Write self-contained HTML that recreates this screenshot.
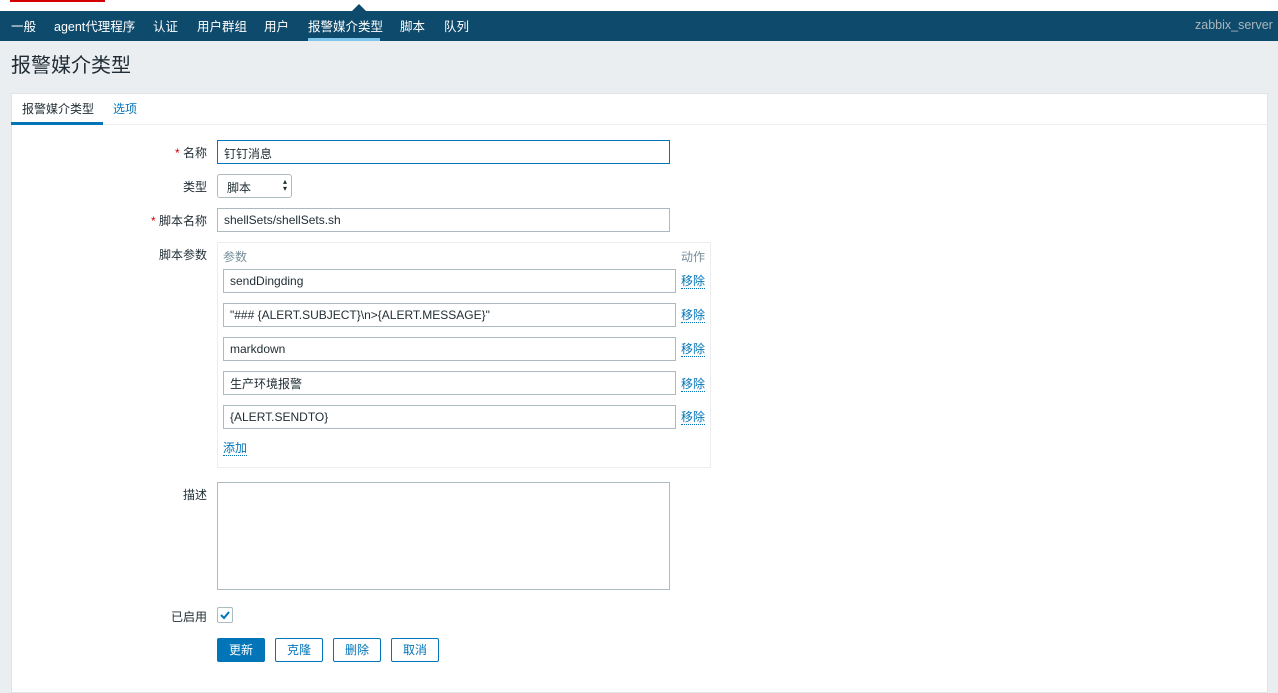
<!DOCTYPE html>
<html><head><meta charset="utf-8"><style>
*{box-sizing:border-box;margin:0;padding:0}
body{width:1278px;height:675px;overflow:hidden;background:#ebeef0;font-family:"Liberation Sans","Noto Sans CJK SC",sans-serif;font-size:12px;color:#1f2c33;position:relative}
.top{position:absolute;left:0;top:0;width:1278px;height:11px;background:#fff}
.red{position:absolute;left:10px;top:0;width:95px;height:2px;background:#d40000}
.nav{position:absolute;left:0;top:11px;width:1278px;height:30px;background:#0e4a6b}
.nav span{position:absolute;top:5px;color:#fff;font-size:12.5px}
.arrow{position:absolute;left:352px;top:4px;width:0;height:0;border-left:7px solid transparent;border-right:7px solid transparent;border-bottom:7px solid #0e4a6b}
.act{position:absolute;left:308px;top:38px;width:72px;height:3px;background:#7fc6ec}
h1{position:absolute;left:11px;top:49px;font-size:20px;font-weight:normal;color:#1f2c33}
.panel{position:absolute;left:11px;top:93px;width:1257px;height:600px;background:#fff;border:1px solid #dfe4e7}
.tabs{position:absolute;left:11px;top:93px;width:1257px;height:32px;border-bottom:1px solid #ebeef0}
.t1{position:absolute;left:22px;top:100px;font-size:12px}
.t1u{position:absolute;left:11px;top:122px;width:92px;height:3px;background:#0275b8}
.t2{position:absolute;left:113px;top:100px;color:#0275b8}
.lbl{position:absolute;right:1071px;font-size:12px;white-space:nowrap}
.star{color:#d40000}
.in{position:absolute;height:24px;border:1px solid #acbbc2;background:#fff;padding:4px 6px;font-size:12px}
.link{position:absolute;color:#0275b8;border-bottom:1px dotted #0275b8;line-height:14px}
.btn{position:absolute;top:638px;height:24px;border:1px solid #0275b8;border-radius:2px;color:#0275b8;text-align:center;line-height:22px;background:#fff}
</style></head><body>
<div class="top"></div><div class="red"></div>
<div class="nav">
<span style="left:11px">一般</span><span style="left:54px">agent代理程序</span><span style="left:153px">认证</span><span style="left:197px">用户群组</span><span style="left:264px">用户</span><span style="left:308px">报警媒介类型</span><span style="left:400px">脚本</span><span style="left:444px">队列</span><span style="left:1195px;top:7px;color:#aab6bd">zabbix_server</span>
</div>
<div class="arrow"></div><div class="act"></div>
<h1>报警媒介类型</h1>
<div class="panel"></div><div class="tabs"></div>
<div class="t1">报警媒介类型</div><div class="t1u"></div><div class="t2">选项</div>

<div class="lbl" style="top:144px"><span class="star">* </span>名称</div>
<div class="in" style="left:217px;top:140px;width:453px;border-color:#0275b8">钉钉消息</div>
<div class="lbl" style="top:178px">类型</div>
<div class="in" style="left:217px;top:174px;width:75px;border-radius:3px;padding-left:9px">脚本<span style="position:absolute;right:4px;top:3px;font-size:8px;line-height:7px">▴<br>▾</span></div>
<div class="lbl" style="top:212px"><span class="star">* </span>脚本名称</div>
<div class="in" style="left:217px;top:208px;width:453px">shellSets/shellSets.sh</div>
<div class="lbl" style="top:246px">脚本参数</div>
<div style="position:absolute;left:217px;top:242px;width:494px;height:226px;border:1px solid #ebeef0"></div>
<div style="position:absolute;left:223px;top:248px;color:#768d99">参数</div>
<div style="position:absolute;left:681px;top:248px;color:#768d99">动作</div>
<div class="in" style="left:223px;top:269px;width:453px">sendDingding</div><div class="link" style="left:681px;top:274px">移除</div>
<div class="in" style="left:223px;top:303px;width:453px">"### {ALERT.SUBJECT}\n&gt;{ALERT.MESSAGE}"</div><div class="link" style="left:681px;top:308px">移除</div>
<div class="in" style="left:223px;top:337px;width:453px">markdown</div><div class="link" style="left:681px;top:342px">移除</div>
<div class="in" style="left:223px;top:371px;width:453px;padding-top:3px">生产环境报警</div><div class="link" style="left:681px;top:377px">移除</div>
<div class="in" style="left:223px;top:405px;width:453px">{ALERT.SENDTO}</div><div class="link" style="left:681px;top:410px">移除</div>
<div class="link" style="left:223px;top:441px">添加</div>
<div class="lbl" style="top:486px">描述</div>
<div class="in" style="left:217px;top:482px;width:453px;height:108px"></div>
<div class="lbl" style="top:608px">已启用</div>
<div style="position:absolute;left:217px;top:607px;width:16px;height:16px;border:1px solid #acbbc2;border-radius:2px;background:#fff"><svg width="14" height="14" viewBox="0 0 14 14"><path d="M3 7l3 3 5-6" stroke="#0275b8" stroke-width="2" fill="none"/></svg></div>
<div class="btn" style="left:217px;width:48px;background:#0275b8;color:#fff">更新</div>
<div class="btn" style="left:275px;width:48px">克隆</div>
<div class="btn" style="left:333px;width:48px">删除</div>
<div class="btn" style="left:391px;width:48px">取消</div>
</body></html>
